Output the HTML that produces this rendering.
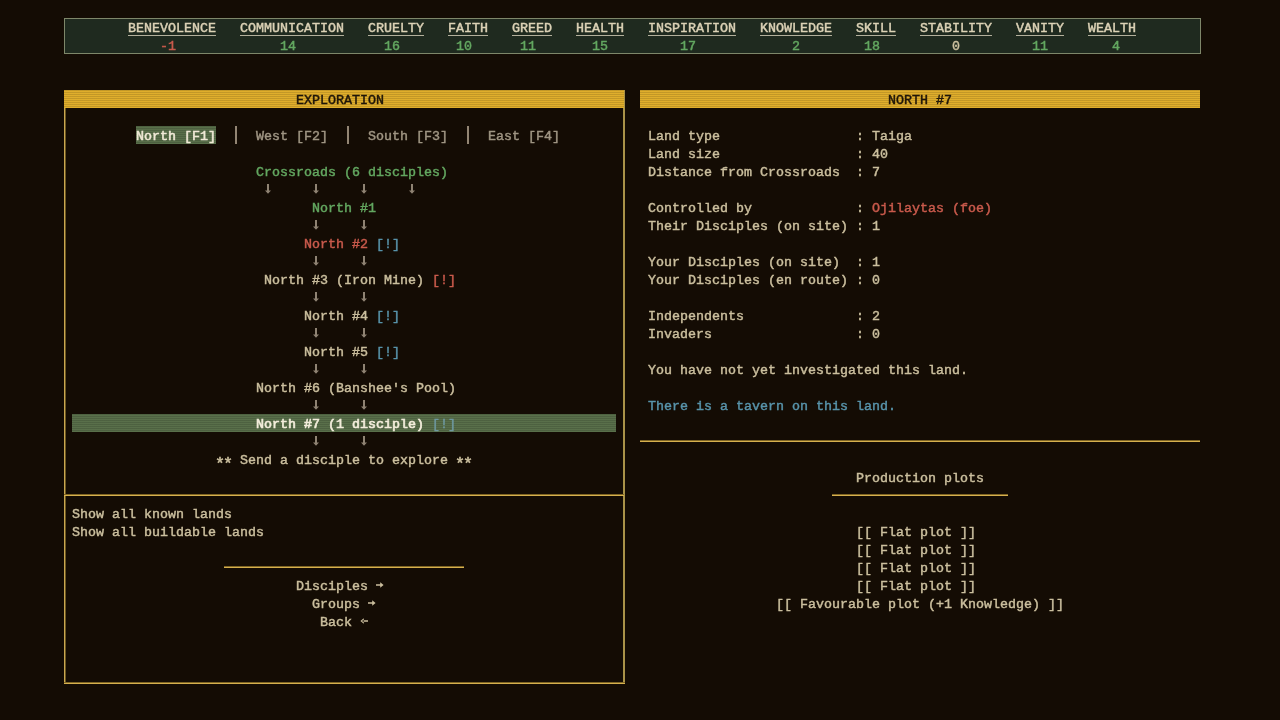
<!DOCTYPE html>
<html><head><meta charset="utf-8"><style>
html,body{margin:0;padding:0;width:1280px;height:720px;overflow:hidden;background:#140c04;}
body{position:relative;font-family:"Liberation Mono",monospace;font-size:13.333px;line-height:18px;color:#cbbf9e;-webkit-text-stroke-width:0.45px;}
#w{position:absolute;left:0;top:0;width:1280px;height:720px;will-change:transform;}
.t{position:absolute;white-space:pre;height:18px;padding-top:2px;box-sizing:border-box;}
u{text-decoration:underline;text-underline-offset:3px;text-decoration-thickness:1px;text-decoration-color:#b4b09c;}
.box{position:absolute;box-sizing:border-box;}
#top{left:64px;top:18px;width:1137px;height:36px;background:#1f2a1f;border:1px solid #7e876a;}
.hdr{position:absolute;top:90px;height:18px;background:repeating-linear-gradient(to bottom, rgba(0,0,0,0.13) 0px, rgba(0,0,0,0.13) 1px, rgba(0,0,0,0) 1px, rgba(0,0,0,0) 2px),#e0ae2c;}
#lp{left:64px;top:90px;width:561px;height:595px;border:2px solid #d5a940;border-left-color:#b39849;border-right-color:#b39849;}
.hl{position:absolute;background:repeating-linear-gradient(to bottom, rgba(0,0,0,0.13) 0px, rgba(0,0,0,0.13) 1px, rgba(0,0,0,0) 1px, rgba(0,0,0,0) 2px),#596f4a;}
.ar{position:absolute;}
.st{display:inline-block;width:8px;transform:translateY(4px) scale(1.25);}
.line{position:absolute;height:2px;background:linear-gradient(to bottom,#7f6524 0,#7f6524 1px,#d6b04e 1px,#d6b04e 2px);}
</style></head><body><div id="w">
<div id="top" class="box"></div>
<div class="box" style="left:64px;top:90px;width:1px;height:594px;background:#c9a852;"></div>
<div class="box" style="left:65px;top:108px;width:1px;height:575px;background:#6e5820;"></div>
<div class="box" style="left:623px;top:90px;width:2px;height:594px;background:#a99248;"></div>
<div class="hdr" style="left:64px;width:560px;"></div>
<div class="hdr" style="left:640px;width:560px;"></div>
<div class="hl" style="left:72px;top:414px;width:544px;height:18px;"></div>
<div class="line" style="left:64px;top:494px;width:560px;"></div>
<div class="line" style="left:224px;top:566px;width:240px;"></div>
<div class="line" style="left:640px;top:440px;width:560px;"></div>
<div class="line" style="left:832px;top:494px;width:176px;"></div>
<div class="line" style="left:64px;top:682px;width:561px;"></div>
<div class="t" style="left:296px;top:90px;color:#1e1509;">EXPLORATION</div>
<div class="t" style="left:888px;top:90px;color:#1e1509;">NORTH #7</div>
<div class="t" style="left:128px;top:18px;color:#dcd2b6;"><u>BENEVOLENCE</u></div>
<div class="t" style="left:160px;top:36px;color:#c95a4c;-webkit-text-stroke-width:0.45px;">-1</div>
<div class="t" style="left:240px;top:18px;color:#dcd2b6;"><u>COMMUNICATION</u></div>
<div class="t" style="left:280px;top:36px;color:#63a760;-webkit-text-stroke-width:0.45px;">14</div>
<div class="t" style="left:368px;top:18px;color:#dcd2b6;"><u>CRUELTY</u></div>
<div class="t" style="left:384px;top:36px;color:#63a760;-webkit-text-stroke-width:0.45px;">16</div>
<div class="t" style="left:448px;top:18px;color:#dcd2b6;"><u>FAITH</u></div>
<div class="t" style="left:456px;top:36px;color:#63a760;-webkit-text-stroke-width:0.45px;">10</div>
<div class="t" style="left:512px;top:18px;color:#dcd2b6;"><u>GREED</u></div>
<div class="t" style="left:520px;top:36px;color:#63a760;-webkit-text-stroke-width:0.45px;">11</div>
<div class="t" style="left:576px;top:18px;color:#dcd2b6;"><u>HEALTH</u></div>
<div class="t" style="left:592px;top:36px;color:#63a760;-webkit-text-stroke-width:0.45px;">15</div>
<div class="t" style="left:648px;top:18px;color:#dcd2b6;"><u>INSPIRATION</u></div>
<div class="t" style="left:680px;top:36px;color:#63a760;-webkit-text-stroke-width:0.45px;">17</div>
<div class="t" style="left:760px;top:18px;color:#dcd2b6;"><u>KNOWLEDGE</u></div>
<div class="t" style="left:792px;top:36px;color:#63a760;-webkit-text-stroke-width:0.45px;">2</div>
<div class="t" style="left:856px;top:18px;color:#dcd2b6;"><u>SKILL</u></div>
<div class="t" style="left:864px;top:36px;color:#63a760;-webkit-text-stroke-width:0.45px;">18</div>
<div class="t" style="left:920px;top:18px;color:#dcd2b6;"><u>STABILITY</u></div>
<div class="t" style="left:952px;top:36px;color:#cbbf9e;-webkit-text-stroke-width:0.45px;">0</div>
<div class="t" style="left:1016px;top:18px;color:#dcd2b6;"><u>VANITY</u></div>
<div class="t" style="left:1032px;top:36px;color:#63a760;-webkit-text-stroke-width:0.45px;">11</div>
<div class="t" style="left:1088px;top:18px;color:#dcd2b6;"><u>WEALTH</u></div>
<div class="t" style="left:1112px;top:36px;color:#63a760;-webkit-text-stroke-width:0.45px;">4</div>
<div class="hl" style="left:136px;top:126px;width:80px;height:18px;"></div>
<div class="t" style="left:136px;top:126px;color:#f0e9d6;-webkit-text-stroke-width:0.55px;">North [F1]</div>
<div class="box" style="left:235px;top:126px;width:2px;height:18px;background:#928573;"></div>
<div class="box" style="left:347px;top:126px;width:2px;height:18px;background:#928573;"></div>
<div class="box" style="left:467px;top:126px;width:2px;height:18px;background:#928573;"></div>
<div class="t" style="left:256px;top:126px;color:#9f9583;">West [F2]</div>
<div class="t" style="left:368px;top:126px;color:#9f9583;">South [F3]</div>
<div class="t" style="left:488px;top:126px;color:#9f9583;">East [F4]</div>
<div class="t" style="left:256px;top:162px;color:#63a760;">Crossroads (6 disciples)</div>
<svg class="ar" style="left:264px;top:180px" width="8" height="18" viewBox="0 0 8 18"><path d="M3 4h2v7H3z M1 10.5h6L4 13.8z" fill="#8f8373"/></svg>
<svg class="ar" style="left:312px;top:180px" width="8" height="18" viewBox="0 0 8 18"><path d="M3 4h2v7H3z M1 10.5h6L4 13.8z" fill="#8f8373"/></svg>
<svg class="ar" style="left:360px;top:180px" width="8" height="18" viewBox="0 0 8 18"><path d="M3 4h2v7H3z M1 10.5h6L4 13.8z" fill="#8f8373"/></svg>
<svg class="ar" style="left:408px;top:180px" width="8" height="18" viewBox="0 0 8 18"><path d="M3 4h2v7H3z M1 10.5h6L4 13.8z" fill="#8f8373"/></svg>
<div class="t" style="left:312px;top:198px;color:#63a760;">North #1</div>
<svg class="ar" style="left:312px;top:216px" width="8" height="18" viewBox="0 0 8 18"><path d="M3 4h2v7H3z M1 10.5h6L4 13.8z" fill="#8f8373"/></svg>
<svg class="ar" style="left:360px;top:216px" width="8" height="18" viewBox="0 0 8 18"><path d="M3 4h2v7H3z M1 10.5h6L4 13.8z" fill="#8f8373"/></svg>
<div class="t" style="left:304px;top:234px;"><span style="color:#c95a4c;">North #2</span> <span style="color:#5893aa;">[!]</span></div>
<svg class="ar" style="left:312px;top:252px" width="8" height="18" viewBox="0 0 8 18"><path d="M3 4h2v7H3z M1 10.5h6L4 13.8z" fill="#8f8373"/></svg>
<svg class="ar" style="left:360px;top:252px" width="8" height="18" viewBox="0 0 8 18"><path d="M3 4h2v7H3z M1 10.5h6L4 13.8z" fill="#8f8373"/></svg>
<div class="t" style="left:264px;top:270px;"><span style="color:#cbbf9e;">North #3 (Iron Mine)</span> <span style="color:#c95a4c;">[!]</span></div>
<svg class="ar" style="left:312px;top:288px" width="8" height="18" viewBox="0 0 8 18"><path d="M3 4h2v7H3z M1 10.5h6L4 13.8z" fill="#8f8373"/></svg>
<svg class="ar" style="left:360px;top:288px" width="8" height="18" viewBox="0 0 8 18"><path d="M3 4h2v7H3z M1 10.5h6L4 13.8z" fill="#8f8373"/></svg>
<div class="t" style="left:304px;top:306px;"><span style="color:#cbbf9e;">North #4</span> <span style="color:#5893aa;">[!]</span></div>
<svg class="ar" style="left:312px;top:324px" width="8" height="18" viewBox="0 0 8 18"><path d="M3 4h2v7H3z M1 10.5h6L4 13.8z" fill="#8f8373"/></svg>
<svg class="ar" style="left:360px;top:324px" width="8" height="18" viewBox="0 0 8 18"><path d="M3 4h2v7H3z M1 10.5h6L4 13.8z" fill="#8f8373"/></svg>
<div class="t" style="left:304px;top:342px;"><span style="color:#cbbf9e;">North #5</span> <span style="color:#5893aa;">[!]</span></div>
<svg class="ar" style="left:312px;top:360px" width="8" height="18" viewBox="0 0 8 18"><path d="M3 4h2v7H3z M1 10.5h6L4 13.8z" fill="#8f8373"/></svg>
<svg class="ar" style="left:360px;top:360px" width="8" height="18" viewBox="0 0 8 18"><path d="M3 4h2v7H3z M1 10.5h6L4 13.8z" fill="#8f8373"/></svg>
<div class="t" style="left:256px;top:378px;color:#cbbf9e;">North #6 (Banshee&#x27;s Pool)</div>
<svg class="ar" style="left:312px;top:396px" width="8" height="18" viewBox="0 0 8 18"><path d="M3 4h2v7H3z M1 10.5h6L4 13.8z" fill="#8f8373"/></svg>
<svg class="ar" style="left:360px;top:396px" width="8" height="18" viewBox="0 0 8 18"><path d="M3 4h2v7H3z M1 10.5h6L4 13.8z" fill="#8f8373"/></svg>
<div class="t" style="left:256px;top:414px;"><span style="color:#f3eddb;-webkit-text-stroke-width:0.65px;">North #7 (1 disciple)</span> <span style="color:#6e98a0;">[!]</span></div>
<svg class="ar" style="left:312px;top:432px" width="8" height="18" viewBox="0 0 8 18"><path d="M3 4h2v7H3z M1 10.5h6L4 13.8z" fill="#8f8373"/></svg>
<svg class="ar" style="left:360px;top:432px" width="8" height="18" viewBox="0 0 8 18"><path d="M3 4h2v7H3z M1 10.5h6L4 13.8z" fill="#8f8373"/></svg>
<div class="t" style="left:216px;top:450px;color:#cbbf9e;"><span class="st">*</span><span class="st">*</span> Send a disciple to explore <span class="st">*</span><span class="st">*</span></div>
<div class="t" style="left:72px;top:504px;color:#cbbf9e;">Show all known lands</div>
<div class="t" style="left:72px;top:522px;color:#cbbf9e;">Show all buildable lands</div>
<div class="t" style="left:296px;top:576px;color:#cbbf9e;">Disciples</div>
<svg class="ar" style="left:376px;top:576px" width="8" height="18" viewBox="0 0 8 18"><path d="M0 8.2h5.5v1.6H0z M4.2 6.2L7.6 9L4.2 11.8z" fill="#cbbf9e"/></svg>
<div class="t" style="left:312px;top:594px;color:#cbbf9e;">Groups</div>
<svg class="ar" style="left:368px;top:594px" width="8" height="18" viewBox="0 0 8 18"><path d="M0 8.2h5.5v1.6H0z M4.2 6.2L7.6 9L4.2 11.8z" fill="#cbbf9e"/></svg>
<div class="t" style="left:320px;top:612px;color:#cbbf9e;">Back</div>
<svg class="ar" style="left:360px;top:612px" width="8" height="18" viewBox="0 0 8 18"><path d="M2.5 8.2H8v1.6H2.5z M3.8 6.2L0.4 9L3.8 11.8z" fill="#cbbf9e"/></svg>
<div class="t" style="left:648px;top:126px;color:#cbbf9e;">Land type                 : Taiga</div>
<div class="t" style="left:648px;top:144px;color:#cbbf9e;">Land size                 : 40</div>
<div class="t" style="left:648px;top:162px;color:#cbbf9e;">Distance from Crossroads  : 7</div>
<div class="t" style="left:648px;top:198px;color:#cbbf9e;">Controlled by             : <span style="color:#c95a4c;">Ojilaytas (foe)</span></div>
<div class="t" style="left:648px;top:216px;color:#cbbf9e;">Their Disciples (on site) : 1</div>
<div class="t" style="left:648px;top:252px;color:#cbbf9e;">Your Disciples (on site)  : 1</div>
<div class="t" style="left:648px;top:270px;color:#cbbf9e;">Your Disciples (en route) : 0</div>
<div class="t" style="left:648px;top:306px;color:#cbbf9e;">Independents              : 2</div>
<div class="t" style="left:648px;top:324px;color:#cbbf9e;">Invaders                  : 0</div>
<div class="t" style="left:648px;top:360px;color:#cbbf9e;">You have not yet investigated this land.</div>
<div class="t" style="left:648px;top:396px;color:#5893aa;">There is a tavern on this land.</div>
<div class="t" style="left:856px;top:468px;color:#cbbf9e;">Production plots</div>
<div class="t" style="left:856px;top:522px;color:#cbbf9e;">[[ Flat plot ]]</div>
<div class="t" style="left:856px;top:540px;color:#cbbf9e;">[[ Flat plot ]]</div>
<div class="t" style="left:856px;top:558px;color:#cbbf9e;">[[ Flat plot ]]</div>
<div class="t" style="left:856px;top:576px;color:#cbbf9e;">[[ Flat plot ]]</div>
<div class="t" style="left:776px;top:594px;color:#cbbf9e;">[[ Favourable plot (+1 Knowledge) ]]</div>
</div></body></html>
